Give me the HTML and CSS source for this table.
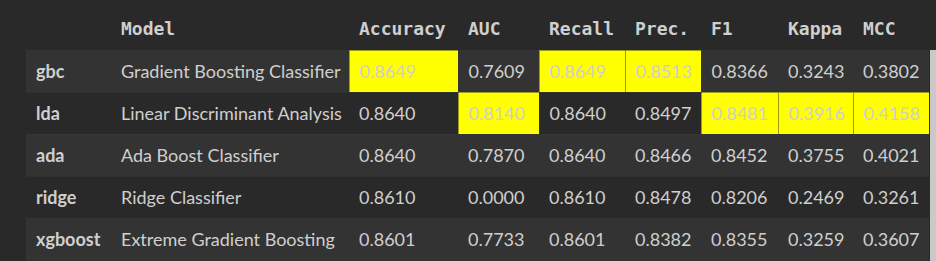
FILE: index.html
```html
<!DOCTYPE html>
<html>
<head>
<meta charset="utf-8">
<link rel="stylesheet" href="styles.css">
</head>
<body>
<div class="wrap">
<table class="df">
<colgroup>
<col class="c-idx"><col class="c-model"><col class="c-acc"><col class="c-auc"><col class="c-rec"><col class="c-prec"><col class="c-f1"><col class="c-kap"><col class="c-mcc">
</colgroup>
<thead>
<tr><th></th><th>Model</th><th>Accuracy</th><th>AUC</th><th>Recall</th><th>Prec.</th><th>F1</th><th>Kappa</th><th>MCC</th></tr>
</thead>
<tbody>
<tr class="odd"><td class="idx">gbc</td><td>Gradient Boosting Classifier</td><td class="hl">0.8649</td><td>0.7609</td><td class="hl">0.8649</td><td class="hl">0.8513</td><td>0.8366</td><td>0.3243</td><td>0.3802</td></tr>
<tr><td class="idx">lda</td><td>Linear Discriminant Analysis</td><td>0.8640</td><td class="hl">0.8140</td><td>0.8640</td><td>0.8497</td><td class="hl">0.8481</td><td class="hl">0.3916</td><td class="hl">0.4158</td></tr>
<tr class="odd"><td class="idx">ada</td><td>Ada Boost Classifier</td><td>0.8640</td><td>0.7870</td><td>0.8640</td><td>0.8466</td><td>0.8452</td><td>0.3755</td><td>0.4021</td></tr>
<tr><td class="idx">ridge</td><td>Ridge Classifier</td><td>0.8610</td><td>0.0000</td><td>0.8610</td><td>0.8478</td><td>0.8206</td><td>0.2469</td><td>0.3261</td></tr>
<tr class="odd"><td class="idx">xgboost</td><td>Extreme Gradient Boosting</td><td>0.8601</td><td>0.7733</td><td>0.8601</td><td>0.8382</td><td>0.8355</td><td>0.3259</td><td>0.3607</td></tr>
</tbody>
</table>
<div class="scroll"></div>
</div>
</body>
</html>
```

FILE: styles.css
```css
html, body {
  margin: 0;
  padding: 0;
  background: #292929;
  height: 261px;
  overflow: hidden;
}
.wrap {
  display: flex;
  align-items: flex-start;
  padding-left: 26px;
}
.df {
  table-layout: fixed;
  border-collapse: collapse;
  width: 903px;
  font-family: Lato, "Noto Sans", sans-serif;
  font-size: 18px;
  color: #cfcfcf;
}
.c-idx { width: 85px; }
.c-model { width: 238px; }
.c-acc { width: 109px; }
.c-auc { width: 81px; }
.c-rec { width: 86px; }
.c-prec { width: 76px; }
.c-f1 { width: 77px; }
.c-kap { width: 75px; }
.c-mcc { width: 76px; }
.df th {
  height: 50px;
  padding: 8px 0 0 10px;
  box-sizing: border-box;
  text-align: left;
  font-family: "DejaVu Sans Mono", monospace;
  font-weight: bold;
  font-size: 18px;
  color: #cfcfcf;
}
.df thead tr { border-bottom: 1px solid #454545; }
.df td {
  height: 42px;
  padding: 0 0 0 10px;
  box-sizing: border-box;
  white-space: nowrap;
  text-align: left;
  line-height: 1;
  border: 1px solid rgba(55, 55, 55, 0.5);
  border-left: none;
  border-right: none;
}
.df tbody tr { background: #292929; }
.df tbody tr.odd { background: #333333; }
.df td.idx { font-weight: bold; }
.df td.hl {
  background: #ffff00;
  color: #cfcfcf;
  border: 1px solid rgba(55, 55, 55, 0.5);
}
.scroll {
  margin-top: 50px;
  width: 7px;
  height: 211px;
  background: #c9c9c9;
}
```
